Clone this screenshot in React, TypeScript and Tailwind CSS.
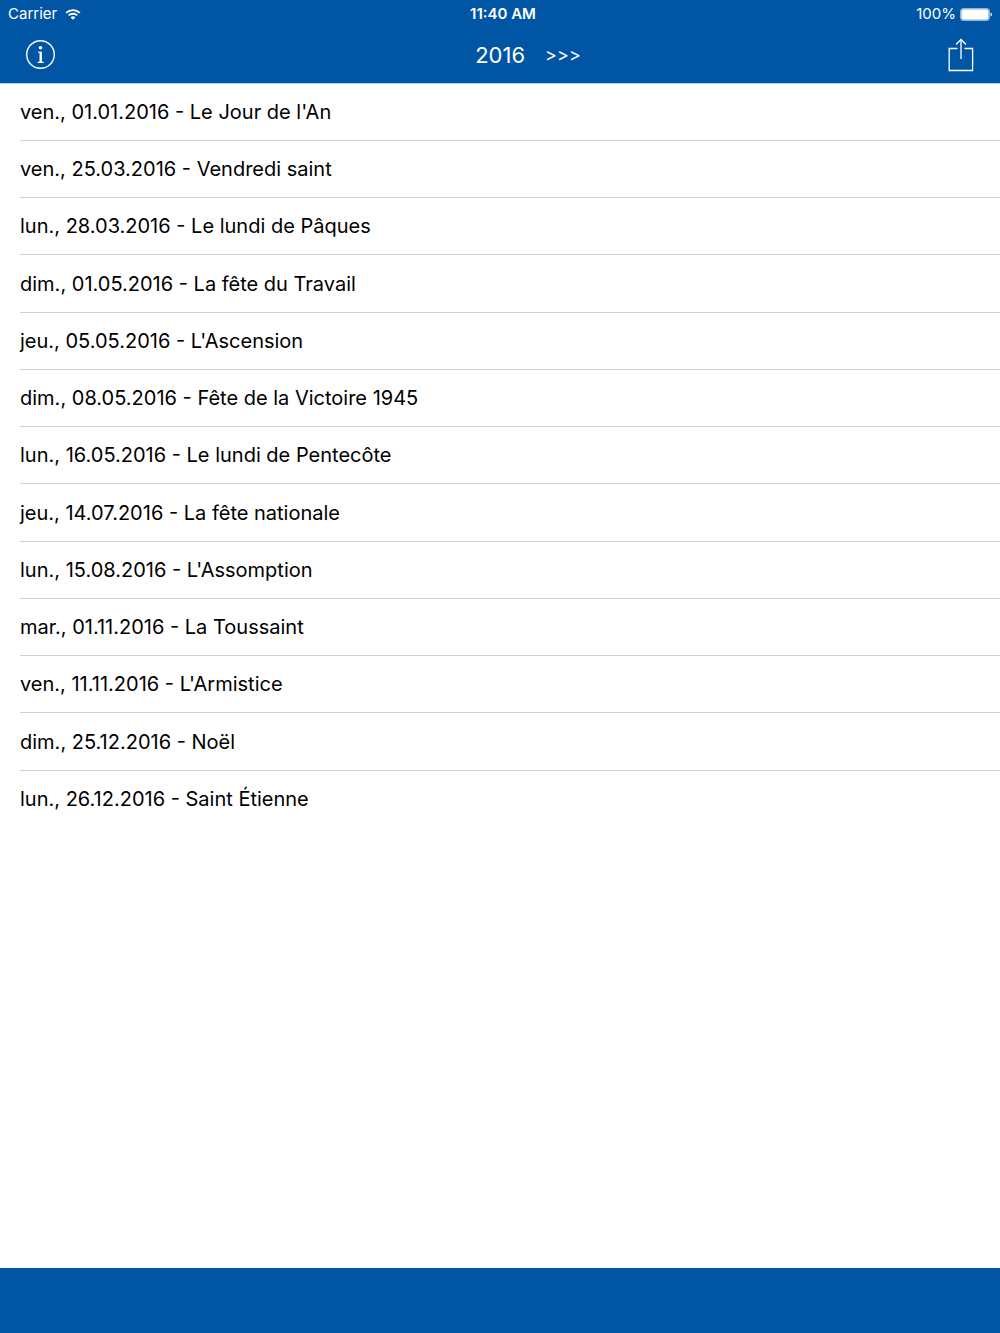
import { useState } from 'react';

type Holiday = {
  day: string;
  date: string;
  name: string;
};

const holidays: Holiday[] = [
  { day: 'ven.', date: '01.01.2016', name: "Le Jour de l'An" },
  { day: 'ven.', date: '25.03.2016', name: 'Vendredi saint' },
  { day: 'lun.', date: '28.03.2016', name: 'Le lundi de Pâques' },
  { day: 'dim.', date: '01.05.2016', name: 'La fête du Travail' },
  { day: 'jeu.', date: '05.05.2016', name: "L'Ascension" },
  { day: 'dim.', date: '08.05.2016', name: 'Fête de la Victoire 1945' },
  { day: 'lun.', date: '16.05.2016', name: 'Le lundi de Pentecôte' },
  { day: 'jeu.', date: '14.07.2016', name: 'La fête nationale' },
  { day: 'lun.', date: '15.08.2016', name: "L'Assomption" },
  { day: 'mar.', date: '01.11.2016', name: 'La Toussaint' },
  { day: 'ven.', date: '11.11.2016', name: "L'Armistice" },
  { day: 'dim.', date: '25.12.2016', name: 'Noël' },
  { day: 'lun.', date: '26.12.2016', name: 'Saint Étienne' },
];

const WifiIcon = () => (
  <svg width="16" height="13" viewBox="0 0 18 14" fill="none" stroke="currentColor" strokeWidth="2" aria-hidden="true">
    <path d="M1.3 5.2a11 11 0 0 1 15.4 0" />
    <path d="M4.2 8.1a6.9 6.9 0 0 1 9.6 0" />
    <path d="M9 13 6.3 10.3a3.9 3.9 0 0 1 5.4 0Z" fill="currentColor" stroke="none" />
  </svg>
);

const BatteryIcon = () => (
  <svg width="32" height="13" viewBox="0 0 32 13" aria-hidden="true">
    <rect x="0.5" y="0.5" width="29" height="12" rx="2.5" fill="none" stroke="#8db4d9" />
    <rect x="1.3" y="1.3" width="27.4" height="10.4" rx="1.6" fill="currentColor" />
    <path d="M30.6 4.4c1.7.7 1.7 3.5 0 4.2Z" fill="currentColor" />
  </svg>
);

const InfoIcon = () => (
  <svg width="30" height="30" viewBox="0 0 30 30" fill="none" stroke="currentColor" aria-hidden="true">
    <circle cx="14.5" cy="14.5" r="13.8" strokeWidth="1.4" />
    <circle cx="14.5" cy="7.7" r="1.8" fill="currentColor" stroke="none" />
    <path d="M11.8 12.2h3.2v10" strokeWidth="1" />
    <path d="M14.7 11.8v10.7" strokeWidth="2.4" />
    <path d="M11.7 22.4h6" strokeWidth="1.2" />
  </svg>
);

const ShareIcon = () => (
  <svg width="26" height="34" viewBox="0 0 26 34" fill="none" stroke="currentColor" strokeWidth="1.3" aria-hidden="true">
    <path d="M9.5 10.5H1.2v22h23.4v-22h-8.1" />
    <path d="M13 21V1.6" />
    <path d="M8 6.5l5-5 5 5" />
  </svg>
);

const App = () => {
  const [year, setYear] = useState(2016);
  const visible = holidays.filter(holiday => holiday.date.endsWith(String(year)));

  return (
    <div className="flex min-h-screen flex-col bg-white font-['Inter','Liberation_Sans',sans-serif] text-black">
      <header className="border-b border-[#b3cce4] bg-[#0055a4] text-white">
        {/* Status bar */}
        <div className="grid h-7 grid-cols-3 items-center px-2 text-[15px] leading-5">
          <div className="flex items-center gap-2">
            <span>Carrier</span>
            <WifiIcon />
          </div>
          <span className="pl-1.5 text-center font-semibold">11:40 AM</span>
          <div className="flex items-center justify-end gap-1">
            <span>100%</span>
            <BatteryIcon />
          </div>
        </div>

        {/* Navigation bar */}
        <div className="grid h-[55px] grid-cols-3 items-center px-[26px] pb-0.5">
          <button type="button" aria-label="Info" className="justify-self-start">
            <InfoIcon />
          </button>
          <div className="flex items-center justify-center gap-5 pl-14 text-[22px] leading-7">
            <h1>{year}</h1>
            <button type="button" aria-label="Année suivante" className="text-lg leading-7" onClick={() => setYear(year + 1)}>
              &gt;&gt;&gt;
            </button>
          </div>
          <button type="button" aria-label="Partager" className="justify-self-end">
            <ShareIcon />
          </button>
        </div>
      </header>

      <main className="flex-1">
        <ul className="pl-5">
          {visible.map(holiday => (
            <li
              key={holiday.date}
              className="flex min-h-[57px] items-center border-b border-[#d0d0d3] text-[20px] leading-7 last:border-transparent nth-[4n]:min-h-[58px]"
            >
              {holiday.day}, {holiday.date} - {holiday.name}
            </li>
          ))}
        </ul>
      </main>

      <footer className="h-[65px] bg-[#0055a4]" />
    </div>
  );
};

export default App;
